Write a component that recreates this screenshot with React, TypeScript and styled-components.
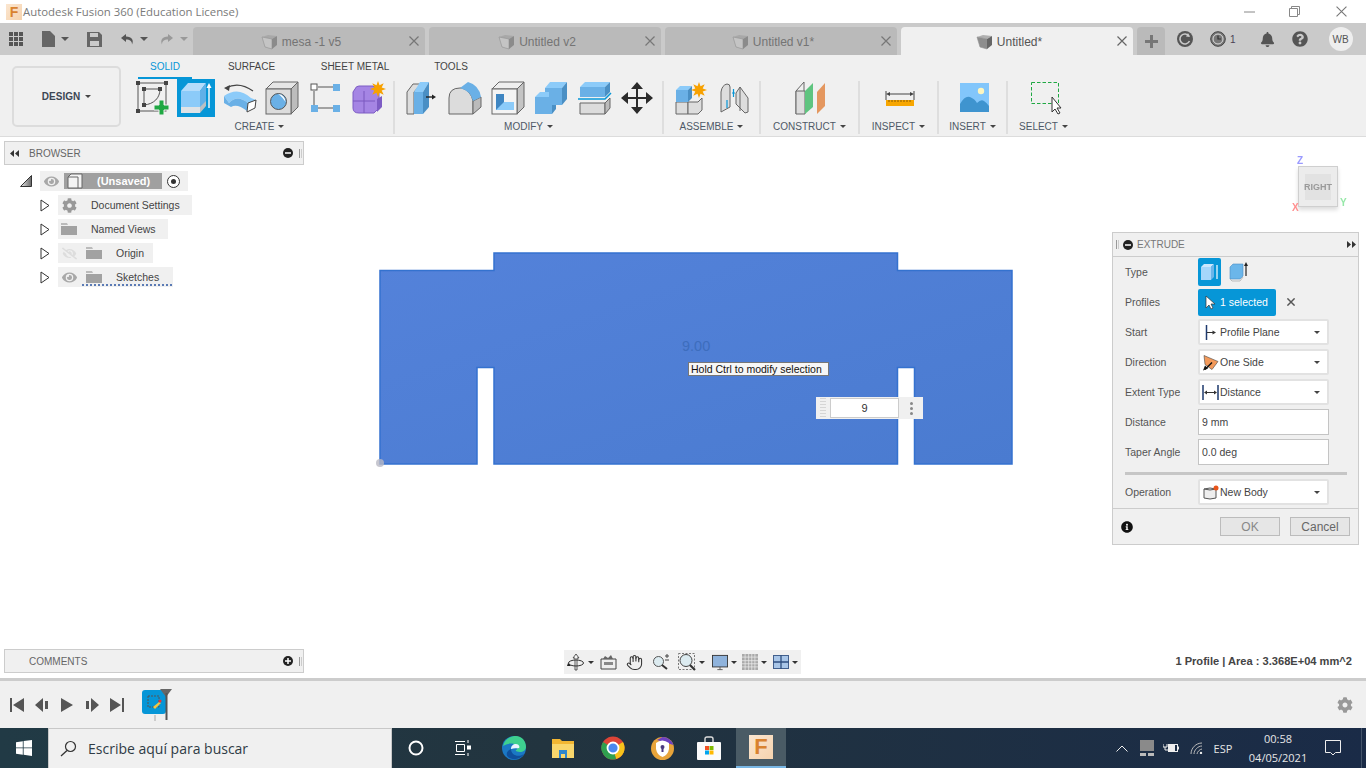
import React from "react";
import styled, { createGlobalStyle } from "styled-components";
import { FaCog, FaBell, FaQuestionCircle, FaEye, FaEyeSlash, FaInfoCircle } from "react-icons/fa";
import { Hand } from "lucide-react";

const UI_FONT = `"Liberation Sans", Arial, sans-serif`;
const WIN_FONT = `"Open Sans", "Noto Sans", sans-serif`;
const BLUE = "#0696d7";

const GlobalStyle = createGlobalStyle`
  html, body { margin: 0; padding: 0; background: #fff; overflow: hidden; }
  * { box-sizing: border-box; }
  svg { display: block; flex: none; }
`;

const Caret = styled.span<{ $color?: string; $size?: number }>`
  display: inline-block;
  width: 0;
  height: 0;
  border-left: ${(p) => p.$size ?? 3}px solid transparent;
  border-right: ${(p) => p.$size ?? 3}px solid transparent;
  border-top: ${(p) => p.$size ?? 3}px solid ${(p) => p.$color ?? "#444"};
`;

/* ---------- ribbon drawings, every one in a 38x38 box ---------- */

const CreateSketchIcon = () => (
  <svg width="38" height="38" viewBox="0 0 38 38">
    <rect x="4" y="4" width="28" height="28" fill="none" stroke="#555" />
    <path d="M10 10h16M10 10v16M26 10c0 9-6 15-16 16" fill="none" stroke="#555" />
    {[[2, 2], [30, 2], [2, 30], [8, 8], [24, 8], [8, 24]].map(([x, y]) => (
      <rect key={`${x}-${y}`} x={x} y={y} width="4" height="4" fill="#444" />
    ))}
    <path d="M25 21h5v5h5v5h-5v5h-5v-5h-5v-5h5z" fill="#1fa843" stroke="#f0f0f0" />
  </svg>
);

const ExtrudeIcon = () => (
  <svg width="38" height="38" viewBox="0 0 38 38">
    <path d="M4 12l7-8h18l-6 8z" fill="#b4dcfb" />
    <path d="M4 12h19v21H4z" fill="#8ccbf9" />
    <path d="M23 12l6-8v22l-6 7z" fill="#5fb0e8" />
    <path d="M4 28h19v6H4z" fill="#dfe3e6" />
    <path d="M23 28l6-6v5l-6 7z" fill="#b9c0c4" />
    <path d="M32 29V7" stroke="#fff" strokeWidth="1.4" />
    <path d="M32 4l-2.5 5h5z" fill="#fff" />
  </svg>
);

const RevolveIcon = () => (
  <svg width="38" height="38" viewBox="0 0 38 38">
    <path d="M6 9Q19 2 33 12" fill="none" stroke="#444" strokeWidth="1.2" />
    <path d="M4 9l6-3-1 6z" fill="#444" />
    <path d="M4 17Q18 7 31 19l5 2-8 3Q17 15 9 24z" fill="#8ccbf9" />
    <path d="M4 17l5 7Q17 15 28 24l-1 8Q17 24 11 28L4 24z" fill="#6ab0e6" />
    <path d="M28 24l8-3-1 8-8 4z" fill="#fff" stroke="#444" />
  </svg>
);

const HoleIcon = () => (
  <svg width="38" height="38" viewBox="0 0 38 38">
    <path d="M3 10l7-7h25l-7 7z" fill="#e6e6e6" stroke="#666" />
    <path d="M28 10l7-7v25l-7 7z" fill="#bcbcbc" stroke="#666" />
    <rect x="3" y="10" width="25" height="25" fill="#dcdcdc" stroke="#666" />
    <circle cx="15.5" cy="22.5" r="8" fill="#6ab0e6" stroke="#555" />
    <path d="M15.5 15a8 8 0 0 1 7 8c-3-5-5-6-7-8z" fill="#fff" />
  </svg>
);

const PatternIcon = () => (
  <svg width="38" height="38" viewBox="0 0 38 38">
    <path d="M12 8h15M8 12v14M12 29h15" stroke="#555" />
    <rect x="5" y="5" width="6" height="6" fill="#fff" stroke="#555" />
    <rect x="27" y="5" width="7" height="7" fill="#6ab0e6" />
    <rect x="5" y="26" width="7" height="7" fill="#6ab0e6" />
    <rect x="27" y="26" width="7" height="7" fill="#6ab0e6" />
  </svg>
);

const StarBurst = ({ cx, cy, r }: { cx: number; cy: number; r: number }) => {
  const pts = Array.from({ length: 16 }, (_, i) => {
    const a = (i * Math.PI) / 8;
    const d = i % 2 ? r * 0.5 : r;
    return `${(cx + d * Math.cos(a)).toFixed(1)},${(cy + d * Math.sin(a)).toFixed(1)}`;
  }).join(" ");
  return <polygon points={pts} fill="#f7a100" />;
};

const FormIcon = () => (
  <svg width="38" height="38" viewBox="0 0 38 38">
    <path d="M6 10q1-3 4-3h14l6 6v16l-5 5H10q-6 0-6-5V13z" fill="#a585e4" stroke="#7d5cc4" />
    <path d="M4 22h22M15 12v22" stroke="#7a58bf" />
    <path d="M28 20l5-3v11l-5 5z" fill="#7d5cc4" />
    <StarBurst cx={29} cy={10} r={8} />
  </svg>
);

const PressPullIcon = () => (
  <svg width="38" height="38" viewBox="0 0 38 38">
    <path d="M4 13l6-8h8l-7 8v22H4z" fill="#ddd" stroke="#666" />
    <path d="M11 13l6-10h9l-6 10z" fill="#8ccbf9" />
    <path d="M11 13h9v22h-9z" fill="#6ab0e6" />
    <path d="M20 13l6-10v25l-6 7z" fill="#4a8fc4" />
    <path d="M23 18h7" stroke="#222" strokeWidth="1.4" />
    <path d="M33 18l-4-2.5v5z" fill="#222" />
  </svg>
);

const FilletIcon = () => (
  <svg width="38" height="38" viewBox="0 0 38 38">
    <path d="M3 35V19Q3 9 14 9h2q9 3 11 13v13z" fill="#dcdcdc" stroke="#666" />
    <path d="M27 22l8-4v10l-8 7z" fill="#bbb" stroke="#666" />
    <path d="M14 9l8-6q11 3 13 15l-8 4Q25 12 14 9z" fill="#6ab0e6" />
  </svg>
);

const ShellIcon = () => (
  <svg width="38" height="38" viewBox="0 0 38 38">
    <path d="M3 10l7-7h25l-7 7z" fill="#eee" stroke="#666" />
    <path d="M28 10l7-7v25l-7 7z" fill="#c4c4c4" stroke="#666" />
    <rect x="3" y="10" width="25" height="25" fill="#f4f4f4" stroke="#666" />
    <rect x="7" y="15" width="8" height="16" fill="#3f86c2" />
    <path d="M7 31l8-8h10v8z" fill="#8ccbf9" />
  </svg>
);

const CombineIcon = () => (
  <svg width="38" height="38" viewBox="0 0 38 38">
    <path d="M13 9l5-6h17l-5 6z" fill="#8ccbf9" />
    <path d="M13 9h17v17H13z" fill="#6ab0e6" />
    <path d="M30 9l5-6v17l-5 6z" fill="#4a8fc4" />
    <path d="M3 18l5-5h9v5z" fill="#8ccbf9" />
    <path d="M3 18h17v17H3z" fill="#6ab0e6" />
    <path d="M20 26l4 0v4l-4 5z" fill="#4a8fc4" />
  </svg>
);

const SplitIcon = () => (
  <svg width="38" height="38" viewBox="0 0 38 38">
    <path d="M5 8l5-5h25l-5 5z" fill="#8ccbf9" />
    <path d="M5 8h25v10H5z" fill="#6ab0e6" />
    <path d="M30 8l5-5v10l-5 5z" fill="#4a8fc4" />
    <path d="M3 20h27l6-6" fill="none" stroke={BLUE} strokeWidth="1.5" />
    <path d="M5 24h25v11H5z" fill="#dcdcdc" stroke="#666" />
    <path d="M30 24l5-5v10l-5 6z" fill="#bbb" stroke="#666" />
  </svg>
);

const MoveIcon = () => (
  <svg width="38" height="38" viewBox="0 0 38 38">
    <path d="M19 9v20M9 19h20" stroke="#2b2b2b" strokeWidth="2" />
    <path d="M19 3l6 7H13zM19 35l6-7H13zM3 19l7-6v12zM35 19l-7-6v12z" fill="#2b2b2b" />
  </svg>
);

const NewComponentIcon = () => (
  <svg width="38" height="38" viewBox="0 0 38 38">
    <path d="M4 23h12v12H4z" fill="#ddd" stroke="#666" />
    <path d="M16 23h10l4-4v12l-4 4H16z" fill="#ddd" stroke="#666" />
    <path d="M4 11l4-4h12l-4 4z" fill="#8ccbf9" />
    <path d="M4 11h12v12H4z" fill="#6ab0e6" />
    <path d="M16 11l4-4v12l-4 4z" fill="#4a8fc4" />
    <StarBurst cx={27} cy={11} r={8} />
  </svg>
);

const JointIcon = () => (
  <svg width="38" height="38" viewBox="0 0 38 38">
    <path d="M6 13q1-7 6-8 3 0 3 3v20l-9 5z" fill="#ddd" stroke="#666" />
    <path d="M21 14l4-6 8 11v14l-3 1-9-9z" fill="#ddd" stroke="#666" />
    <path d="M25 8v24" stroke="#666" />
    <path d="M17 14h3M12 21v8M18.5 10v8" stroke={BLUE} strokeWidth="1.2" />
  </svg>
);

const PlanesIcon = () => (
  <svg width="38" height="38" viewBox="0 0 38 38">
    <path d="M4 12l8-9v25l-8 7z" fill="#f0f0f0" stroke="#666" />
    <path d="M4 12h9v23H4z" fill="#ddd" stroke="#666" />
    <path d="M13 12l8-8v24l-8 7z" fill="#5fc47f" />
    <path d="M25 13l8-9v23l-8 8z" fill="#e4975f" />
  </svg>
);

const MeasureIcon = () => (
  <svg width="38" height="38" viewBox="0 0 38 38">
    <path d="M5 12v9M33 12v9" stroke="#444" />
    <path d="M7 15h24" stroke="#444" />
    <path d="M5 15l4-2v4zM33 15l-4-2v4z" fill="#444" />
    <rect x="5" y="21" width="28" height="6" fill="#f7a600" />
    <path d="M8 21v2M11 21v2M14 21v2M17 21v2M20 21v2M23 21v2M26 21v2M29 21v2" stroke="#8a5a00" />
  </svg>
);

const PictureIcon = () => (
  <svg width="38" height="38" viewBox="0 0 38 38">
    <rect x="5" y="4" width="29" height="29" fill="#82c6fb" />
    <circle cx="26" cy="12" r="3.2" fill="#fdf6c0" />
    <path d="M5 25q5-9 10-7t7 6q4-4 7-2t5 5v6H5z" fill="#3f94cf" />
  </svg>
);

const SelectIcon = () => (
  <svg width="38" height="38" viewBox="0 0 38 38">
    <rect x="5.5" y="3.5" width="27" height="21" fill="none" stroke="#1fa843" strokeDasharray="3.5 2" />
    <path d="M26 18v15l3-3 3 5 2-1-3-5h4z" fill="#fff" stroke="#333" />
  </svg>
);

/* ---------- window chrome ---------- */

const Page = styled.div`
  width: 1366px;
  height: 768px;
  display: flex;
  flex-direction: column;
  overflow: hidden;
  font-family: ${UI_FONT};
`;

const TitleBar = styled.div`
  height: 23px;
  flex: none;
  display: flex;
  align-items: center;
  background: #fff;
  padding-left: 6px;
`;

const AppBadge = styled.span<{ $size: number }>`
  width: ${(p) => p.$size}px;
  height: ${(p) => p.$size}px;
  display: flex;
  align-items: center;
  justify-content: center;
  background: linear-gradient(135deg, #fbe6d0, #f6d3ae);
  color: #d9822f;
  font: bold ${(p) => p.$size - 2}px ${UI_FONT};
`;

const TitleText = styled.span`
  margin-left: 1px;
  font: 11.4px ${WIN_FONT};
  color: #7a7a7a;
`;

const WindowButtons = styled.div`
  margin-left: auto;
  display: flex;
  gap: 34px;
  padding-right: 19px;
  align-items: center;
  & > svg:last-child { margin-left: 2px; }
`;

const TabBar = styled.div`
  height: 32px;
  flex: none;
  display: flex;
  align-items: flex-end;
  background: #cacaca;
`;

const QuickTools = styled.div`
  width: 193px;
  height: 32px;
  flex: none;
  display: flex;
  align-items: center;
  padding-left: 9px;
`;

const QuickTool = styled.span<{ $left: number }>`
  display: flex;
  align-items: center;
  gap: 6px;
  margin-left: ${(p) => p.$left}px;
`;

const DocTab = styled.div<{ $active?: boolean }>`
  width: 232px;
  height: 28px;
  margin-right: 4px;
  padding: 1px 16px 0 0;
  display: flex;
  align-items: center;
  justify-content: center;
  gap: 4px;
  position: relative;
  border-radius: 4px 4px 0 0;
  background: ${(p) => (p.$active ? "#f0f0f0" : "#bababa")};
  color: ${(p) => (p.$active ? "#555" : "#747474")};
  font-size: 12px;
`;

const TabClose = styled.span`
  position: absolute;
  right: 6px;
  top: 9px;
`;

const NewTab = styled.div`
  width: 28px;
  height: 28px;
  display: flex;
  align-items: center;
  justify-content: center;
  background: #bababa;
  border-radius: 4px 4px 0 0;
`;

const TabActions = styled.div`
  flex: 1;
  height: 32px;
  display: flex;
  align-items: center;
  padding-left: 12px;
`;

const TabAction = styled.span<{ $left?: number }>`
  display: flex;
  align-items: center;
  gap: 4px;
  margin-left: ${(p) => p.$left ?? 0}px;
  color: #4a3f55;
  font-size: 10px;
`;

const Avatar = styled.span`
  width: 24px;
  height: 24px;
  margin-left: 21px;
  border-radius: 50%;
  background: #eee;
  color: #555;
  font-size: 10px;
  display: flex;
  align-items: center;
  justify-content: center;
`;

const Toolbar = styled.div`
  height: 82px;
  flex: none;
  display: flex;
  background: #f0f0f0;
  border-bottom: 1px solid #dcdcdc;
  padding-left: 12px;
`;

const DesignButton = styled.div`
  width: 109px;
  height: 61px;
  margin: 11px 4px 0 0;
  display: flex;
  align-items: center;
  justify-content: center;
  gap: 5px;
  border: 2px solid #dcdcdc;
  border-radius: 5px;
  font-size: 10px;
  font-weight: bold;
  color: #3c4654;
`;

const RibbonColumn = styled.div`
  display: flex;
  flex-direction: column;
`;

const RibbonTabs = styled.div`
  height: 24px;
  display: flex;
  padding-left: 13px;
`;

const RibbonTab = styled.div<{ $w: number; $active?: boolean }>`
  width: ${(p) => p.$w}px;
  height: 24px;
  display: flex;
  align-items: center;
  justify-content: center;
  font-size: 10px;
  color: ${(p) => (p.$active ? BLUE : "#444")};
  border-bottom: 2px solid ${(p) => (p.$active ? BLUE : "transparent")};
`;

const Ribbon = styled.div`
  display: flex;
`;

const RibbonGroup = styled.div<{ $w: number }>`
  width: ${(p) => p.$w}px;
  height: 57px;
  position: relative;
  display: flex;
  flex-direction: column;
  align-items: center;
  &::after {
    content: "";
    position: absolute;
    right: -1px;
    top: 2px;
    bottom: 2px;
    width: 2px;
    background: #dedede;
  }
  &:last-child::after { display: none; }
`;

const RibbonIcons = styled.div`
  display: flex;
  height: 38px;
  margin-left: 2px;
`;

const RibbonCell = styled.div<{ $active?: boolean }>`
  width: 43px;
  height: 38px;
  display: flex;
  justify-content: center;
  background: ${(p) => (p.$active ? `linear-gradient(90deg, transparent 2px, ${BLUE} 2px, ${BLUE} 40px, transparent 40px)` : "none")};
`;

const GroupLabel = styled.div`
  height: 20px;
  display: flex;
  align-items: center;
  gap: 4px;
  font-size: 10px;
  color: #4e5866;
`;

/* ---------- viewport ---------- */

const Viewport = styled.div`
  height: 541px;
  flex: none;
  position: relative;
  background: #fff;
`;

const SketchCanvas = styled.svg`
  position: absolute;
  left: 0;
  top: 0;
`;

const LeftColumn = styled.div`
  position: relative;
  width: 300px;
  height: 541px;
  margin-left: 4px;
  padding: 4px 0 5px;
  display: flex;
  flex-direction: column;
  justify-content: space-between;
`;

const PanelHead = styled.div`
  height: 24px;
  display: flex;
  align-items: center;
  background: #f0f0f0;
  border: 1px solid #ccc;
  font-size: 10px;
  color: #666;
`;

const PanelArrows = styled.span`
  width: 24px;
  padding-left: 5px;
  flex: none;
`;

const PanelEnd = styled.span`
  margin-left: auto;
  display: flex;
  align-items: center;
  gap: 6px;
  padding-right: 1px;
`;

const GripBar = styled.span`
  width: 3px;
  height: 9px;
  border-left: 1px solid #999;
  border-right: 1px solid #ccc;
`;

const Tree = styled.div`
  display: flex;
  flex-direction: column;
`;

const TreeRow = styled.div<{ $indent: number; $first?: boolean }>`
  height: 24px;
  display: flex;
  align-items: center;
  padding-left: ${(p) => p.$indent}px;
  margin-top: ${(p) => (p.$first ? 4 : 0)}px;
`;

const Chip = styled.div<{ $w: number; $wavy?: boolean }>`
  width: ${(p) => p.$w}px;
  height: 20px;
  margin-left: 8px;
  display: flex;
  align-items: center;
  position: relative;
  background: #f0f0f0;
  font-size: 10.5px;
  color: #444;
  &::after {
    content: ${(p) => (p.$wavy ? '""' : "none")};
    position: absolute;
    left: 24px;
    right: 1px;
    bottom: 1px;
    height: 2px;
    background: repeating-linear-gradient(90deg, #5b7bb5 0 2px, transparent 2px 4px);
  }
`;

const ChipLabel = styled.span<{ $left: number }>`
  margin-left: ${(p) => p.$left}px;
`;

const RootLabel = styled.span`
  width: 98px;
  height: 16px;
  margin-left: 5px;
  padding-left: 33px;
  display: flex;
  align-items: center;
  background: #a0a0a0;
  color: #fff;
  font-weight: bold;
  font-size: 11px;
  position: relative;
  & > svg {
    position: absolute;
    left: 3px;
    top: 0;
  }
`;

const ChipIcon = styled.span<{ $left: number; $w?: number }>`
  margin-left: ${(p) => p.$left}px;
  width: ${(p) => p.$w ?? 16}px;
  display: flex;
  justify-content: center;
  flex: none;
`;

const ViewCube = styled.div`
  position: absolute;
  left: 1298px;
  top: 29px;
  width: 40px;
  height: 41px;
  display: flex;
  align-items: center;
  justify-content: center;
  background: #ececec;
  border: 1px solid #cfcfcf;
  box-shadow: 0 3px 4px #ddd;
  filter: blur(0.7px);
`;

const CubeFace = styled.span`
  width: 26px;
  height: 26px;
  display: flex;
  align-items: center;
  justify-content: center;
  background: #e2e2e2;
  color: #9a9a9a;
  font-size: 9px;
  font-weight: bold;
`;

const AxisLetter = styled.span<{ $x: number; $y: number; $c: string }>`
  position: absolute;
  left: ${(p) => p.$x}px;
  top: ${(p) => p.$y}px;
  color: ${(p) => p.$c};
  font-size: 10px;
  font-weight: bold;
  filter: blur(0.6px);
`;

const GhostDimension = styled.span`
  position: absolute;
  left: 682px;
  top: 201px;
  color: #3d6dbd;
  font-size: 14.5px;
`;

const CursorTip = styled.div`
  position: absolute;
  left: 688px;
  top: 225px;
  width: 141px;
  height: 14px;
  padding-left: 2px;
  display: flex;
  align-items: center;
  background: #f6f6f6;
  border: 1px solid #777;
  font-size: 10.5px;
  color: #111;
  white-space: nowrap;
`;

const DistanceWidget = styled.div`
  position: absolute;
  left: 816px;
  top: 260px;
  width: 107px;
  height: 22px;
  display: flex;
  align-items: center;
  background: #f0f0f0;
`;

const WidgetGrip = styled.span`
  width: 14px;
  height: 20px;
  background: repeating-linear-gradient(180deg, #d5d5d5 0 1px, transparent 1px 3px) 4px 0 / 6px 100% no-repeat;
`;

const WidgetInput = styled.div`
  width: 69px;
  height: 20px;
  display: flex;
  align-items: center;
  justify-content: center;
  background: #fff;
  border: 1px solid #ccc;
  font-size: 11px;
  color: #333;
`;

const WidgetMenu = styled.span`
  flex: 1;
  display: flex;
  flex-direction: column;
  align-items: center;
  gap: 2px;
  & > i {
    width: 3px;
    height: 3px;
    border-radius: 50%;
    background: #888;
  }
`;

const ExtrudePanel = styled.div`
  position: absolute;
  left: 1112px;
  top: 95px;
  width: 247px;
  height: 313px;
  background: #f0f0f0;
  border: 1px solid #ccc;
  font-size: 10.5px;
  color: #555;
`;

const ExtrudeHead = styled.div`
  height: 24px;
  display: flex;
  align-items: center;
  gap: 4px;
  padding: 0 1px 0 3px;
  border-bottom: 1px solid #ccc;
  color: #777;
  font-size: 10px;
`;

const ExtrudeRows = styled.div`
  padding-left: 12px;
`;

const FormRow = styled.div`
  height: 30px;
  display: flex;
  align-items: center;
`;

const FormLabel = styled.span`
  width: 73px;
  flex: none;
`;

const TypeButton = styled.span<{ $on?: boolean }>`
  width: 23px;
  height: 28px;
  display: flex;
  align-items: center;
  justify-content: center;
  margin-right: 6px;
  border-radius: 2px;
  background: ${(p) => (p.$on ? BLUE : "none")};
`;

const SelectedChip = styled.span`
  width: 78px;
  height: 27px;
  display: flex;
  align-items: center;
  gap: 5px;
  padding-left: 7px;
  border-radius: 2px;
  background: ${BLUE};
  color: #fff;
  font-size: 10.5px;
`;

const ClearX = styled.span`
  margin-left: 11px;
`;

const SelectBox = styled.div`
  width: 131px;
  height: 26px;
  display: flex;
  align-items: center;
  padding: 0 7px 0 1px;
  background: #fff;
  border: 2px solid #e2e2e2;
  border-radius: 2px;
  color: #444;
`;

const SelectIconSlot = styled.span`
  width: 19px;
  flex: none;
  display: flex;
  justify-content: center;
`;

const SelectCaret = styled(Caret)`
  margin-left: auto;
`;

const TextInput = styled.div`
  width: 131px;
  height: 26px;
  display: flex;
  align-items: center;
  padding-left: 3px;
  background: #fff;
  border: 1px solid #c4c4c4;
  color: #444;
`;

const PanelRule = styled.div`
  height: 3px;
  margin: 5px 11px 2px 0;
  background: #c6c6c6;
`;

const ExtrudeFoot = styled.div`
  height: 36px;
  margin-top: 1px;
  display: flex;
  align-items: center;
  gap: 10px;
  padding: 0 8px;
  border-top: 1px solid #ccc;
`;

const FootButton = styled.span<{ $first?: boolean; $dim?: boolean }>`
  width: 60px;
  height: 19px;
  margin-left: ${(p) => (p.$first ? "auto" : 0)};
  display: flex;
  align-items: center;
  justify-content: center;
  background: #e6e6e6;
  border: 1px solid #bcbcbc;
  font-size: 12px;
  color: ${(p) => (p.$dim ? "#888" : "#666")};
`;

const NavBar = styled.div`
  position: absolute;
  left: 564px;
  top: 513px;
  width: 237px;
  height: 24px;
  display: flex;
  align-items: center;
  padding-left: 3px;
  background: #f0f0f0;
`;

const NavTool = styled.span<{ $w: number }>`
  width: ${(p) => p.$w}px;
  flex: none;
  display: flex;
  align-items: center;
  gap: 3px;
`;

const StatusText = styled.span`
  position: absolute;
  right: 14px;
  top: 518px;
  font-size: 11.1px;
  font-weight: bold;
  color: #444;
`;

/* ---------- timeline + taskbar ---------- */

const Timeline = styled.div`
  height: 50px;
  flex: none;
  display: flex;
  align-items: center;
  background: #f0f0f0;
  border-top: 3px solid #ccc;
  padding: 0 13px 0 9px;
  gap: 9px;
`;

const TimelineFeature = styled.div`
  width: 48px;
  height: 48px;
  margin-left: 8px;
  position: relative;
`;

const FeatureTile = styled.span`
  position: absolute;
  left: 0;
  top: 9px;
  width: 24px;
  height: 24px;
  border-radius: 3px;
  background: ${BLUE};
  display: flex;
  align-items: center;
  justify-content: center;
`;

const MarkerSvg = styled.svg`
  position: absolute;
  left: 10px;
  top: 8px;
`;

const TimelineGear = styled.span`
  margin-left: auto;
  color: #999;
`;

const Taskbar = styled.div`
  height: 40px;
  flex: none;
  display: flex;
  align-items: stretch;
  background: linear-gradient(90deg, #213a45, #22343f 40%, #1a2b47);
  color: #e6e6e6;
`;

const StartButton = styled.div`
  width: 48px;
  display: flex;
  align-items: center;
  justify-content: center;
`;

const SearchBox = styled.div`
  width: 344px;
  display: flex;
  align-items: center;
  gap: 11px;
  padding-left: 11px;
  background: #f0f0f0;
  border: 1px solid #c8c8c8;
  border-bottom: none;
  font: 14px ${WIN_FONT};
  color: #2f3b45;
`;

const TaskApp = styled.div<{ $w: number; $running?: boolean }>`
  width: ${(p) => p.$w}px;
  display: flex;
  align-items: center;
  justify-content: center;
  background: ${(p) => (p.$running ? "#4a5b65" : "none")};
  border-bottom: ${(p) => (p.$running ? "2px solid #78b6e4" : "none")};
`;

const Tray = styled.div`
  margin-left: auto;
  display: flex;
  align-items: center;
  font: 11px ${WIN_FONT};
`;

const TraySlot = styled.span<{ $w: number }>`
  width: ${(p) => p.$w}px;
  display: flex;
  justify-content: center;
`;

const Clock = styled.span`
  width: 84px;
  line-height: 19px;
  text-align: center;
`;

const TrayEdge = styled.span`
  width: 5px;
  height: 40px;
  margin-left: 15px;
  border-left: 1px solid #44546a;
`;

const SmallCube = ({ dark }: { dark?: boolean }) => (
  <svg width="17" height="16" viewBox="0 0 17 16">
    <path d="M1 3l6-2 9 1-5 3z" fill={dark ? "#b0b0b0" : "#a8a8a8"} />
    <path d="M1 3l10 2v10L4 13z" fill={dark ? "#8d8d8d" : "#c4c4c4"} stroke="#909090" strokeWidth=".6" />
    <path d="M11 5l5-3v9l-5 4z" fill={dark ? "#666" : "#8b8b8b"} />
  </svg>
);

const Cross = ({ size = 10, color = "#777", width = 1.2 }: { size?: number; color?: string; width?: number }) => (
  <svg width={size} height={size} viewBox="0 0 10 10">
    <path d="M.5.5l9 9M9.5.5l-9 9" stroke={color} strokeWidth={width} />
  </svg>
);

const RoundMark = ({ plus }: { plus?: boolean }) => (
  <svg width="10" height="10" viewBox="0 0 10 10">
    <circle cx="5" cy="5" r="5" fill="#222" />
    <path d={plus ? "M2 5h6M5 2v6" : "M2 5h6"} stroke="#fff" strokeWidth="1.5" />
  </svg>
);

const DoubleArrow = ({ right }: { right?: boolean }) => (
  <svg width="9" height="7" viewBox="0 0 9 7">
    <path d={right ? "M0 0l4 3.5L0 7zM5 0l4 3.5L5 7z" : "M4 0L0 3.5 4 7zM9 0L5 3.5 9 7z"} fill="#333" />
  </svg>
);

const Expander = () => (
  <svg width="10" height="13" viewBox="0 0 10 13">
    <path d="M1 1l8 5.500L1 12z" fill="#fff" stroke="#333" />
  </svg>
);

const FolderGlyph = ({ wide = 16 }: { wide?: number }) => (
  <svg width={wide} height="12" viewBox="0 0 16 12">
    <path d="M0 2V0h6l1 2z" fill="#bbb" />
    <path d="M0 3h16v9H0z" fill="#a2a2a2" />
  </svg>
);

const Ribbons = [
  { w: 269, label: "CREATE", icons: [CreateSketchIcon, ExtrudeIcon, RevolveIcon, HoleIcon, PatternIcon, FormIcon] },
  { w: 269, label: "MODIFY", icons: [PressPullIcon, FilletIcon, ShellIcon, CombineIcon, SplitIcon, MoveIcon] },
  { w: 97, label: "ASSEMBLE", icons: [NewComponentIcon, JointIcon] },
  { w: 99, label: "CONSTRUCT", icons: [PlanesIcon] },
  { w: 79, label: "INSPECT", icons: [MeasureIcon] },
  { w: 69, label: "INSERT", icons: [PictureIcon] },
  { w: 73, label: "SELECT", icons: [SelectIcon] },
];

const outline =
  "M380 270.5H494V253H897.5V270.5H1012V464H914.5V367.5H897.5V464H494V367.5H477V464H380Z";

export default function App() {
  return (
    <Page>
      <GlobalStyle />
      <TitleBar>
        <AppBadge $size={16}>F</AppBadge>
        <TitleText>Autodesk Fusion 360 (Education License)</TitleText>
        <WindowButtons>
          <svg width="11" height="2" viewBox="0 0 11 2"><path d="M0 1h11" stroke="#888" /></svg>
          <svg width="11" height="11" viewBox="0 0 11 11">
            <path d="M2.5 2.500v-2h8v8h-2M.5 2.500h8v8h-8z" fill="none" stroke="#888" />
          </svg>
          <Cross size={11} color="#777" width={1} />
        </WindowButtons>
      </TitleBar>

      <TabBar>
        <QuickTools>
          <svg width="15" height="15" viewBox="0 0 15 15" fill="#555">
            {[0, 5, 10].flatMap((x) =>
              [0, 5, 10].map((y) => <rect key={`${x}${y}`} x={x} y={y} width="4" height="4" />)
            )}
          </svg>
          <QuickTool $left={18}>
            <svg width="13" height="16" viewBox="0 0 13 16"><path d="M0 0h8l5 5v11H0z" fill="#666" /></svg>
            <Caret $size={4} $color="#555" />
          </QuickTool>
          <QuickTool $left={18}>
            <svg width="15" height="15" viewBox="0 0 15 15">
              <path d="M0 0h12l3 3v12H0z" fill="#666" />
              <path d="M3 1h8v4H3zM3 9h9v5H3z" fill="#cacaca" />
            </svg>
          </QuickTool>
          <QuickTool $left={18}>
            <svg width="14" height="13" viewBox="0 0 14 13">
              <path d="M6 1L1 5l5 4V6.500c4 0 6 1.500 6 5 2-4 0-8-6-8z" fill="#555" />
            </svg>
            <Caret $size={4} $color="#555" />
          </QuickTool>
          <QuickTool $left={12}>
            <svg width="14" height="13" viewBox="0 0 14 13">
              <path d="M8 1l5 4-5 4V6.500c-4 0-6 1.500-6 5-2-4 0-8 6-8z" fill="#999" />
            </svg>
            <Caret $size={4} $color="#999" />
          </QuickTool>
        </QuickTools>
        <DocTab>
          <SmallCube />mesa -1 v5
          <TabClose><Cross /></TabClose>
        </DocTab>
        <DocTab>
          <SmallCube />Untitled v2
          <TabClose><Cross /></TabClose>
        </DocTab>
        <DocTab>
          <SmallCube />Untitled v1*
          <TabClose><Cross /></TabClose>
        </DocTab>
        <DocTab $active>
          <SmallCube dark />Untitled*
          <TabClose><Cross color="#666" /></TabClose>
        </DocTab>
        <NewTab>
          <svg width="13" height="13" viewBox="0 0 13 13"><path d="M6.5 0v13M0 6.500h13" stroke="#777" strokeWidth="3" /></svg>
        </NewTab>
        <TabActions>
          <TabAction>
            <svg width="16" height="16" viewBox="0 0 16 16">
              <circle cx="8" cy="8" r="8" fill="#555" />
              <path d="M12 5a5 5 0 1 0 .5 5" fill="none" stroke="#cacaca" strokeWidth="1.6" />
              <path d="M11 2l2 4-4-.5z" fill="#cacaca" />
            </svg>
          </TabAction>
          <TabAction $left={17}>
            <svg width="16" height="16" viewBox="0 0 16 16">
              <circle cx="8" cy="8" r="7.3" fill="#777" stroke="#444" />
              <circle cx="8" cy="8" r="5" fill="none" stroke="#ddd" />
              <path d="M8 4.500V8h3" fill="none" stroke="#333" strokeWidth="1.2" />
            </svg>
            1
          </TabAction>
          <TabAction $left={24}><FaBell size={15} color="#555" /></TabAction>
          <TabAction $left={17}><FaQuestionCircle size={16} color="#555" /></TabAction>
          <Avatar>WB</Avatar>
        </TabActions>
      </TabBar>

      <Toolbar>
        <DesignButton>DESIGN <Caret /></DesignButton>
        <RibbonColumn>
          <RibbonTabs>
            <RibbonTab $w={54} $active>SOLID</RibbonTab>
            <RibbonTab $w={119}>SURFACE</RibbonTab>
            <RibbonTab $w={88}>SHEET METAL</RibbonTab>
            <RibbonTab $w={104}>TOOLS</RibbonTab>
          </RibbonTabs>
          <Ribbon>
            {Ribbons.map((g) => (
              <RibbonGroup key={g.label} $w={g.w}>
                <RibbonIcons>
                  {g.icons.map((Icon) => (
                    <RibbonCell key={Icon.name} $active={Icon === ExtrudeIcon}>
                      <Icon />
                    </RibbonCell>
                  ))}
                </RibbonIcons>
                <GroupLabel>{g.label} <Caret /></GroupLabel>
              </RibbonGroup>
            ))}
          </Ribbon>
        </RibbonColumn>
      </Toolbar>

      <Viewport>
        <SketchCanvas width="1366" height="541" viewBox="0 137 1366 541">
          <defs>
            <linearGradient id="bodyFill" x1="0" y1="0" x2="1" y2="1">
              <stop offset="0" stopColor="#5482da" />
              <stop offset="1" stopColor="#4a7bd0" />
            </linearGradient>
          </defs>
          <path d={outline} fill="url(#bodyFill)" stroke="#3472cf" strokeWidth="1.5" />
          <circle cx="380" cy="463" r="4" fill="#b9b9c4" opacity=".8" />
        </SketchCanvas>

        <LeftColumn>
          <div>
            <PanelHead>
              <PanelArrows><DoubleArrow /></PanelArrows>
              BROWSER
              <PanelEnd><RoundMark /><GripBar /></PanelEnd>
            </PanelHead>
            <Tree>
              <TreeRow $indent={16} $first>
                <svg width="12" height="12" viewBox="0 0 12 12">
                  <defs>
                    <linearGradient id="rootTri" x1="0" y1="0" x2="1" y2="0">
                      <stop offset="0" stopColor="#eee" />
                      <stop offset="1" stopColor="#666" />
                    </linearGradient>
                  </defs>
                  <path d="M.5 11.500L11.500.5v11z" fill="url(#rootTri)" stroke="#333" />
                </svg>
                <Chip $w={148}>
                  <ChipIcon $left={3}><FaEye size={15} color="#a8a8a8" /></ChipIcon>
                  <RootLabel>
                    <svg width="16" height="16" viewBox="0 0 16 16">
                      <path d="M1 15V4l3-3h11v14z" fill="#f4f4f4" stroke="#666" />
                      <path d="M1 4h10v11" fill="none" stroke="#666" />
                    </svg>
                    (Unsaved)
                  </RootLabel>
                  <ChipIcon $left={3}>
                    <svg width="13" height="13" viewBox="0 0 13 13">
                      <circle cx="6.5" cy="6.5" r="6" fill="#fff" stroke="#333" />
                      <circle cx="6.5" cy="6.5" r="2.5" fill="#333" />
                    </svg>
                  </ChipIcon>
                </Chip>
              </TreeRow>
              <TreeRow $indent={36}>
                <Expander />
                <Chip $w={134}>
                  <ChipIcon $left={3}><FaCog size={15} color="#999" /></ChipIcon>
                  <ChipLabel $left={14}>Document Settings</ChipLabel>
                </Chip>
              </TreeRow>
              <TreeRow $indent={36}>
                <Expander />
                <Chip $w={110}>
                  <ChipIcon $left={3}><FolderGlyph /></ChipIcon>
                  <ChipLabel $left={14}>Named Views</ChipLabel>
                </Chip>
              </TreeRow>
              <TreeRow $indent={36}>
                <Expander />
                <Chip $w={95}>
                  <ChipIcon $left={3}><FaEyeSlash size={15} color="#ddd" /></ChipIcon>
                  <ChipIcon $left={9}><FolderGlyph /></ChipIcon>
                  <ChipLabel $left={14}>Origin</ChipLabel>
                </Chip>
              </TreeRow>
              <TreeRow $indent={36}>
                <Expander />
                <Chip $w={115} $wavy>
                  <ChipIcon $left={3}><FaEye size={15} color="#a8a8a8" /></ChipIcon>
                  <ChipIcon $left={9}><FolderGlyph /></ChipIcon>
                  <ChipLabel $left={14}>Sketches</ChipLabel>
                </Chip>
              </TreeRow>
            </Tree>
          </div>
          <PanelHead>
            <PanelArrows />
            COMMENTS
            <PanelEnd><RoundMark plus /><GripBar /></PanelEnd>
          </PanelHead>
        </LeftColumn>

        <ViewCube><CubeFace>RIGHT</CubeFace></ViewCube>
        <AxisLetter $x={1297} $y={18} $c="#9a9aff">Z</AxisLetter>
        <AxisLetter $x={1292} $y={65} $c="#ff8f8f">X</AxisLetter>
        <AxisLetter $x={1340} $y={60} $c="#96e8a8">Y</AxisLetter>

        <GhostDimension>9.00</GhostDimension>
        <CursorTip>Hold Ctrl to modify selection</CursorTip>
        <DistanceWidget>
          <WidgetGrip />
          <WidgetInput>9</WidgetInput>
          <WidgetMenu><i /><i /><i /></WidgetMenu>
        </DistanceWidget>

        <ExtrudePanel>
          <ExtrudeHead>
            <GripBar />
            <RoundMark />
            EXTRUDE
            <PanelEnd><DoubleArrow right /></PanelEnd>
          </ExtrudeHead>
          <ExtrudeRows>
            <FormRow>
              <FormLabel>Type</FormLabel>
              <TypeButton $on>
                <svg width="20" height="20" viewBox="0 0 20 20">
                  <path d="M1 5l3-3h10l-3 3z" fill="#cbe7fd" />
                  <path d="M1 5h10v13H1z" fill="#a5d6fb" />
                  <path d="M11 5l3-3v13l-3 3z" fill="#6bb6ea" />
                  <path d="M17 17V3" stroke="#fff" strokeWidth="1.2" />
                </svg>
              </TypeButton>
              <TypeButton>
                <svg width="20" height="22" viewBox="0 0 20 22">
                  <path d="M1 6l3-3h10v12l-3 3H1z" fill="#6bb6ea" stroke="#4a8fc4" strokeWidth=".6" />
                  <path d="M1 18l2 2h8l3-4" fill="none" stroke="#bbb" />
                  <path d="M17 15V4" stroke="#222" strokeWidth="1.2" />
                  <path d="M17 1l-2 4h4z" fill="#222" />
                </svg>
              </TypeButton>
            </FormRow>
            <FormRow>
              <FormLabel>Profiles</FormLabel>
              <SelectedChip>
                <svg width="10" height="15" viewBox="0 0 10 15"><path d="M1 1v12l3-3 2 4 2-1-2-4h4z" fill="#fff" stroke="#333" strokeWidth=".7" /></svg>
                1 selected
              </SelectedChip>
              <ClearX><Cross size={8} color="#555" width={1.8} /></ClearX>
            </FormRow>
            <FormRow>
              <FormLabel>Start</FormLabel>
              <SelectBox>
                <SelectIconSlot>
                  <svg width="12" height="15" viewBox="0 0 12 15"><path d="M1.5 0v15" stroke="#1e3a6e" strokeWidth="1.5" /><path d="M2 7.500h6" stroke="#333" /><path d="M11 7.500l-3.500-2v4z" fill="#333" /></svg>
                </SelectIconSlot>
                Profile Plane
                <SelectCaret />
              </SelectBox>
            </FormRow>
            <FormRow>
              <FormLabel>Direction</FormLabel>
              <SelectBox>
                <SelectIconSlot>
                  <svg width="16" height="17" viewBox="0 0 16 16"><path d="M1 1l14 6-6 8-7-5z" fill="#f39a5b" stroke="#444" strokeWidth=".6" /><path d="M9 8l-7 7" stroke="#111" strokeWidth="1.5" /><path d="M0 16l2-5 3 3z" fill="#111" /></svg>
                </SelectIconSlot>
                One Side
                <SelectCaret />
              </SelectBox>
            </FormRow>
            <FormRow>
              <FormLabel>Extent Type</FormLabel>
              <SelectBox>
                <SelectIconSlot>
                  <svg width="17" height="15" viewBox="0 0 17 15"><path d="M1 0v15M16 0v15" stroke="#1e3a6e" strokeWidth="1.5" /><path d="M3 7.500h11" stroke="#333" /><path d="M2 7.500l3-2v4zM15 7.500l-3-2v4z" fill="#333" /></svg>
                </SelectIconSlot>
                Distance
                <SelectCaret />
              </SelectBox>
            </FormRow>
            <FormRow>
              <FormLabel>Distance</FormLabel>
              <TextInput>9 mm</TextInput>
            </FormRow>
            <FormRow>
              <FormLabel>Taper Angle</FormLabel>
              <TextInput>0.0 deg</TextInput>
            </FormRow>
            <PanelRule />
            <FormRow>
              <FormLabel>Operation</FormLabel>
              <SelectBox>
                <SelectIconSlot>
                  <svg width="16" height="15" viewBox="0 0 16 15"><path d="M1 4q6-2 12 0v9q-6 2-12 0z" fill="#eee" stroke="#555" /><path d="M1 4q6 2 12 0" fill="none" stroke="#555" /><circle cx="13" cy="3" r="2.5" fill="#e8541a" /></svg>
                </SelectIconSlot>
                New Body
                <SelectCaret />
              </SelectBox>
            </FormRow>
          </ExtrudeRows>
          <ExtrudeFoot>
            <FaInfoCircle size={12} color="#111" />
            <FootButton $first $dim>OK</FootButton>
            <FootButton>Cancel</FootButton>
          </ExtrudeFoot>
        </ExtrudePanel>

        <NavBar>
          <NavTool $w={33}>
            <svg width="18" height="18" viewBox="0 0 18 18"><path d="M9 1l3 4h-2v12H8V5H6z" fill="#f4f4f4" stroke="#333" strokeWidth=".8" /><ellipse cx="9" cy="10" rx="7.5" ry="3" fill="none" stroke="#333" /><path d="M1 10l3 3H0z" fill="#222" /></svg>
            <Caret $color="#333" />
          </NavTool>
          <NavTool $w={26}>
            <svg width="17" height="16" viewBox="0 0 17 16"><path d="M1 5h15v10H1z" fill="#eee" stroke="#444" /><path d="M3 5l2-3 3 2 3-3 2 4" fill="#666" /><rect x="4" y="8" width="9" height="3" fill="#888" /></svg>
          </NavTool>
          <NavTool $w={26}><Hand size={17} color="#333" strokeWidth={1.5} /></NavTool>
          <NavTool $w={26}>
            <svg width="18" height="16" viewBox="0 0 18 16"><circle cx="6.5" cy="7.5" r="5" fill="#dcebf0" stroke="#555" /><path d="M10 11l5 4" stroke="#333" strokeWidth="2" /><path d="M13 2h4M15 0v4M13 6h4" stroke="#444" /></svg>
          </NavTool>
          <NavTool $w={34}>
            <svg width="18" height="18" viewBox="0 0 18 18"><rect x=".5" y=".5" width="16" height="16" fill="none" stroke="#777" strokeDasharray="2 1.5" /><circle cx="8" cy="7.5" r="6" fill="#dcebf0" stroke="#444" /><path d="M12 12l5 5" stroke="#333" strokeWidth="2.2" /></svg>
            <Caret $color="#333" />
          </NavTool>
          <NavTool $w={30}>
            <svg width="16" height="17" viewBox="0 0 18 18"><rect x=".5" y="1" width="17" height="13" fill="#8fb3dc" stroke="#333" /><path d="M6 17h6M9 14v3" stroke="#555" /></svg>
            <Caret $color="#333" />
          </NavTool>
          <NavTool $w={31}>
            <svg width="16" height="16" viewBox="0 0 18 18">
              <rect width="18" height="18" fill="#aaa" />
              <path d="M3.5 0v18M7.500 0v18M11 0v18M14.500 0v18M0 3.500h18M0 7.500h18M0 11h18M0 14.500h18" stroke="#eee" strokeWidth=".8" />
            </svg>
            <Caret $color="#333" />
          </NavTool>
          <NavTool $w={30}>
            <svg width="16" height="14" viewBox="0 0 18 16">
              <rect x=".5" y=".5" width="17" height="15" fill="#a9c6e8" stroke="#2f4f80" />
              <path d="M9 0v16M0 8h18" stroke="#2f4f80" strokeWidth="1.5" />
            </svg>
            <Caret $color="#333" />
          </NavTool>
        </NavBar>

        <StatusText>1 Profile | Area : 3.368E+04 mm^2</StatusText>
      </Viewport>

      <Timeline>
        <svg width="16" height="14" viewBox="0 0 16 14" fill="#555"><path d="M1 0h2v14H1zM15 0v14L4 7z" /></svg>
        <svg width="16" height="14" viewBox="0 0 16 14" fill="#555"><path d="M9 0v14L1 7zM11 3h3v8h-3z" /></svg>
        <svg width="16" height="14" viewBox="0 0 16 14" fill="#555"><path d="M2 0l12 7-12 7z" /></svg>
        <svg width="16" height="14" viewBox="0 0 16 14" fill="#555"><path d="M7 0v14l8-7zM2 3h3v8H2z" /></svg>
        <svg width="16" height="14" viewBox="0 0 16 14" fill="#555"><path d="M1 0l11 7-11 7zM13 0h2v14h-2z" /></svg>
        <TimelineFeature>
          <FeatureTile>
            <svg width="16" height="16" viewBox="0 0 16 16">
              <rect x="2" y="2" width="11" height="11" fill="none" stroke="#555" strokeDasharray="2 1" />
              <path d="M7 13l6-5 2 1-6 6z" fill="#f5c542" />
              <circle cx="14" cy="7" r="1.5" fill="#e33" />
            </svg>
          </FeatureTile>
          <MarkerSvg width="24" height="36" viewBox="0 0 24 36">
            <path d="M3 26v6" stroke="#ccc" strokeWidth="2" />
            <path d="M8 0h12l-6 8z" fill="#666" />
            <path d="M14.5 4v27" stroke="#555" strokeWidth="2" />
          </MarkerSvg>
        </TimelineFeature>
        <TimelineGear><FaCog size={16} /></TimelineGear>
      </Timeline>

      <Taskbar>
        <StartButton>
          <svg width="16" height="16" viewBox="0 0 16 16" fill="#fff"><path d="M0 2.200L6.800 1.200v6.300H0zM7.600 1.100L16 0v7.500H7.600zM0 8.300h6.800v6.500L0 13.800zM7.600 8.300H16V16l-8.400-1.200z" /></svg>
        </StartButton>
        <SearchBox>
          <svg width="17" height="17" viewBox="0 0 17 17"><circle cx="10.5" cy="6.5" r="5" fill="none" stroke="#333" strokeWidth="1.2" /><path d="M7 10.500L1 16" stroke="#333" strokeWidth="1.3" /></svg>
          Escribe aquí para buscar
        </SearchBox>
        <TaskApp $w={48}>
          <svg width="16" height="16" viewBox="0 0 16 16"><circle cx="8" cy="8" r="6.5" fill="none" stroke="#fff" strokeWidth="2" /></svg>
        </TaskApp>
        <TaskApp $w={46}>
          <svg width="17" height="16" viewBox="0 0 17 16" fill="none" stroke="#fff"><path d="M0 1.500h10M0 14.500h10M1.500 4.500h8v7h-8z" /><path d="M13 0v3M13 13v3" /><rect x="12.5" y="6" width="3" height="3" fill="#fff" /></svg>
        </TaskApp>
        <TaskApp $w={56}>
          <svg width="24" height="24" viewBox="0 0 24 24">
            <circle cx="12" cy="12" r="12" fill="#1b78c4" />
            <path d="M1 10C3 2 10 0 14 0c6 0 10 5 10 11 0 3-3 5-6 5-3 0-5-1-4-2 2-1 2-5-2-6C8 7 4 8 1 10z" fill="#3ed08f" />
            <path d="M9 13c0-3 2-5 5-5s4 3 3 4c-2 .5-5 0-8 1z" fill="#eaf4ff" />
            <path d="M9 13c0 6 7 9 13 5-3 5-11 7-16 3-2-2-2-6 3-8z" fill="#0f4f9c" />
          </svg>
        </TaskApp>
        <TaskApp $w={42}>
          <svg width="22" height="19" viewBox="0 0 22 19">
            <path d="M0 0h8l2 2h12v17H0z" fill="#f2b632" />
            <rect y="5" width="22" height="14" fill="#f9d66b" />
            <path d="M7 11h8v8h-2v-4H9v4H7z" fill="#2f86cc" />
          </svg>
        </TaskApp>
        <TaskApp $w={58}>
          <svg width="24" height="24" viewBox="0 0 24 24">
            <circle cx="12" cy="12" r="11.500" fill="#dd4437" />
            <path d="M12 12L22 6a11.500 11.500 0 0 1-7 17z" fill="#f6c21b" />
            <path d="M12 12L15 23A11.500 11.500 0 0 1 2 6z" fill="#2fa04f" />
            <circle cx="12" cy="12" r="5.5" fill="#4a88ee" stroke="#fff" strokeWidth="1.8" />
          </svg>
        </TaskApp>
        <TaskApp $w={40}>
          <svg width="23" height="23" viewBox="0 0 23 23">
            <circle cx="11.5" cy="11.5" r="11.5" fill="#e8a43a" />
            <path d="M11.5 0a11.500 11.500 0 0 1 11 8L6 3z" fill="#6f42c1" />
            <path d="M5 6q6-5 13 0v6q-1 6-6.500 8Q6 18 5 12z" fill="#fff" />
            <circle cx="11.5" cy="10" r="2" fill="#4a3a80" />
            <path d="M10.5 10h2v5h-2z" fill="#4a3a80" />
          </svg>
        </TaskApp>
        <TaskApp $w={54}>
          <svg width="24" height="24" viewBox="0 0 24 24">
            <path d="M8 6V3q0-2 2-2h4q2 0 2 2v3" fill="none" stroke="#ddd" strokeWidth="1.4" />
            <rect y="6" width="24" height="18" rx="1" fill="#fbfbfb" />
            <rect x="8" y="10" width="4" height="4" fill="#f25022" />
            <rect x="12.5" y="10" width="4" height="4" fill="#7fba00" />
            <rect x="8" y="14.5" width="4" height="4" fill="#00a4ef" />
            <rect x="12.5" y="14.5" width="4" height="4" fill="#ffb900" />
          </svg>
        </TaskApp>
        <TaskApp $w={50} $running>
          <AppBadge $size={24}>F</AppBadge>
        </TaskApp>
        <Tray>
          <TraySlot $w={24}>
            <svg width="12" height="7" viewBox="0 0 12 7"><path d="M.5 6.500L6 1l5.500 5.500" fill="none" stroke="#eee" /></svg>
          </TraySlot>
          <TraySlot $w={26}>
            <svg width="14" height="16" viewBox="0 0 14 16"><rect width="14" height="11" fill="#8a8a8a" /><rect y="13" width="6" height="3" fill="#bbb" /><rect x="8" y="13" width="6" height="3" fill="#bbb" /></svg>
          </TraySlot>
          <TraySlot $w={22}>
            <svg width="16" height="10" viewBox="0 0 16 10"><path d="M0 1v3h4V1M2 4v3h3" fill="none" stroke="#eee" /><rect x="5.5" y="1.500" width="9" height="7" fill="none" stroke="#eee" /><rect x="6" y="2" width="6" height="6" fill="#eee" /><rect x="15" y="3.500" width="1" height="3" fill="#eee" /></svg>
          </TraySlot>
          <TraySlot $w={28}>
            <svg width="13" height="12" viewBox="0 0 13 12" fill="none" stroke="#bbb"><path d="M1 12C1 6 6 1 12 1M4 12c0-4 4-8 8-8M7 12c0-2 3-5 5-5" /><circle cx="11" cy="11" r="1.2" fill="#eee" stroke="none" /></svg>
          </TraySlot>
          <TraySlot $w={26}>ESP</TraySlot>
          <Clock>00:58<br />04/05/2021</Clock>
          <TraySlot $w={26}>
            <svg width="16" height="16" viewBox="0 0 16 16"><path d="M.5.5h15v12h-5L8 15l-2.500-2.500h-5z" fill="none" stroke="#eee" /></svg>
          </TraySlot>
          <TrayEdge />
        </Tray>
      </Taskbar>
    </Page>
  );
}
